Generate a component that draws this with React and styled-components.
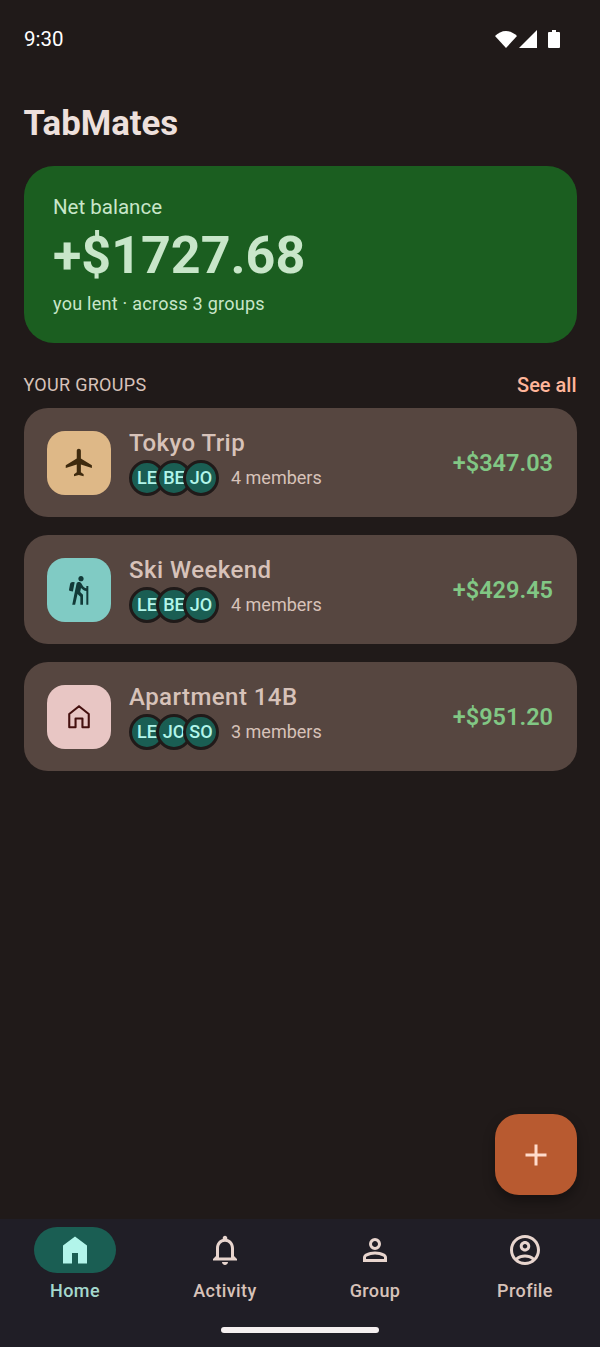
import React from 'react';
import styled, { createGlobalStyle } from 'styled-components';

const groups = [
  { name: 'Tokyo Trip', members: ['LE', 'BE', 'JO'], count: '4 members', amount: '+$347.03', kind: 'trip' },
  { name: 'Ski Weekend', members: ['LE', 'BE', 'JO'], count: '4 members', amount: '+$429.45', kind: 'ski' },
  { name: 'Apartment 14B', members: ['LE', 'JO', 'SO'], count: '3 members', amount: '+$951.20', kind: 'home' },
];

const tileColors = {
  trip: { bg: '#deb887', fg: '#3e2a0e' },
  ski: { bg: '#80cbc4', fg: '#123a38' },
  home: { bg: '#e8c6c4', fg: '#44100f' },
};

const tileIcons = {
  trip: <path d="M21 16v-2l-8-5V3.500c0-.83-.67-1.500-1.500-1.500S10 2.670 10 3.500V9l-8 5v2l8-2.500V19l-2 1.500V22l3.500-1 3.500 1v-1.500L13 19v-5.500l8 2.500z" fill="currentColor" />,
  ski: <path d="M13.500 5.500c1.100 0 2-.9 2-2s-.9-2-2-2-2 .9-2 2 .9 2 2 2zM17.500 10.780c-1.230-.37-2.220-1.170-2.800-2.180l-1-1.600c-.41-.65-1.110-1-1.840-1-.78 0-1.590.5-1.780 1.440S7 23 7 23h2.100l1.800-8 2.100 2v6h2v-7.500l-2.100-2 .6-3c1 1.150 2.410 2.010 4 2.340V23H19V9h-1.500v1.780zM7.430 13.130l-2.120-.41c-.54-.11-.9-.63-.79-1.170l.76-3.930c.21-1.080 1.260-1.790 2.340-1.580l1.160.23-1.350 6.860z" fill="currentColor" />,
  home: <path d="M5.500 18.800V10L12 4.800 18.500 10v8.800h-4.200V13H9.700v5.800z" fill="none" stroke="currentColor" strokeWidth="1.400" strokeLinejoin="round" />,
};

const navItems = [
  { label: 'Home', active: true, path: 'M4 21V9l8-6 8 6v12h-6v-7h-4v7z' },
  { label: 'Activity', path: 'M12 22c1.100 0 2-.9 2-2h-4c0 1.100.9 2 2 2zm6-6v-5c0-3.070-1.630-5.640-4.500-6.320V4c0-.83-.67-1.500-1.500-1.500s-1.500.67-1.500 1.500v.68C7.640 5.360 6 7.920 6 11v5l-2 2v1h16v-1l-2-2zm-2 1H8v-6c0-2.480 1.510-4.500 4-4.500s4 2.020 4 4.500v6z' },
  { label: 'Group', path: 'M12 12q-1.650 0-2.825-1.175Q8 9.650 8 8q0-1.650 1.175-2.825Q10.350 4 12 4q1.650 0 2.825 1.175Q16 6.350 16 8q0 1.650-1.175 2.825Q13.650 12 12 12Zm-8 8v-2.800q0-.85.438-1.563.437-.712 1.162-1.087 1.550-.775 3.150-1.163Q10.350 13 12 13t3.250.387q1.600.388 3.150 1.163.725.375 1.162 1.087Q20 16.350 20 17.200V20Zm2-2h12v-.8q0-.275-.138-.5-.137-.225-.362-.35-1.350-.675-2.725-1.012Q13.400 15 12 15t-2.775.338q-1.375.337-2.725 1.012-.225.125-.362.35-.138.225-.138.5Zm6-8q.825 0 1.413-.588Q14 8.825 14 8t-.587-1.412Q12.825 6 12 6q-.825 0-1.412.588Q10 7.175 10 8t.588 1.412Q11.175 10 12 10Z' },
  { label: 'Profile', path: 'M12 2C6.480 2 2 6.480 2 12s4.480 10 10 10 10-4.480 10-10S17.520 2 12 2zM7.350 18.500C8.660 17.560 10.260 17 12 17s3.340.56 4.650 1.500c-1.310.94-2.910 1.500-4.650 1.500s-3.340-.56-4.650-1.500zm10.790-1.380C16.450 15.800 14.320 15 12 15s-4.450.8-6.140 2.120C4.700 15.730 4 13.950 4 12c0-4.420 3.580-8 8-8s8 3.580 8 8c0 1.950-.7 3.730-1.860 5.120zM12 6c-1.930 0-3.500 1.570-3.500 3.500S10.070 13 12 13s3.500-1.570 3.500-3.500S13.930 6 12 6zm0 5c-.83 0-1.500-.67-1.500-1.500S11.170 8 12 8s1.500.67 1.500 1.500S12.830 11 12 11z' },
];

export default function App() {
  return (
    <Page>
      <GlobalStyle />
      <StatusBar>
        <Clock>9:30</Clock>
        <StatusIcons>
          <svg width="22" height="17" viewBox="0 0 22 17"><path d="M0 5C3 2 6.800 0 11 0s8 2 11 5L11 17z" fill="#fff" /></svg>
          <svg width="18" height="18" viewBox="0 0 18 18"><path d="M18 0v18H0z" fill="#fff" /></svg>
          <svg width="12" height="18" viewBox="0 0 12 18"><path d="M4 0h4v2h3a1 1 0 0 1 1 1v14a1 1 0 0 1-1 1H1a1 1 0 0 1-1-1V3a1 1 0 0 1 1-1h3z" fill="#fff" /></svg>
        </StatusIcons>
      </StatusBar>

      <Main>
        <AppTitle>TabMates</AppTitle>

        <BalanceCard>
          <BalanceLabel>Net balance</BalanceLabel>
          <BalanceAmount>+$1727.68</BalanceAmount>
          <BalanceNote>you lent · across 3 groups</BalanceNote>
        </BalanceCard>

        <SectionHead>
          <SectionTitle>YOUR GROUPS</SectionTitle>
          <SeeAll>See all</SeeAll>
        </SectionHead>

        <GroupList>
          {groups.map(group => (
            <GroupCard key={group.name}>
              <Tile $kind={group.kind}>
                <TileIcon viewBox="0 0 24 24" $kind={group.kind}>
                  {tileIcons[group.kind]}
                </TileIcon>
              </Tile>
              <GroupText>
                <GroupName>{group.name}</GroupName>
                <MemberRow>
                  <Avatars>
                    {group.members.map((m, i) => <Avatar key={m + i}>{m}</Avatar>)}
                  </Avatars>
                  <MemberCount>{group.count}</MemberCount>
                </MemberRow>
              </GroupText>
              <GroupAmount>{group.amount}</GroupAmount>
            </GroupCard>
          ))}
        </GroupList>
      </Main>

      <Fab>
        <svg width="36" height="36" viewBox="0 0 24 24"><path d="M19 13h-6v6h-2v-6H5v-2h6V5h2v6h6v2z" fill="currentColor" /></svg>
      </Fab>

      <BottomNav>
        <NavRow>
          {navItems.map(item => (
            <NavItem key={item.label} $active={item.active}>
              <NavPill $active={item.active}>
                <svg width="36" height="36" viewBox="0 0 24 24"><path d={item.path} fill="currentColor" fillRule="evenodd" /></svg>
              </NavPill>
              <NavLabel>{item.label}</NavLabel>
            </NavItem>
          ))}
        </NavRow>
        <GestureBar />
      </BottomNav>
    </Page>
  );
}

const GlobalStyle = createGlobalStyle`
  html, body {
    margin: 0;
    padding: 0;
    background: #201a19;
  }
  * {
    box-sizing: border-box;
  }
`

const Page = styled.div`
  position: relative;
  display: flex;
  flex-direction: column;
  width: 600px;
  height: 1347px;
  overflow: hidden;
  background: #201a19;
  font-family: Roboto, sans-serif;
`

const StatusBar = styled.div`
  display: flex;
  align-items: center;
  justify-content: space-between;
  height: 78px;
  padding: 0 40px 0 24px;
`

const Clock = styled.span`
  color: #fff;
  font-size: 20.500px;
`

const StatusIcons = styled.div`
  display: flex;
  align-items: center;
  gap: 2px;

  svg:last-child {
    margin-left: 9px;
  }
`

const Main = styled.main`
  flex: 1;
  padding: 0 23.500px;
`

const AppTitle = styled.h1`
  margin: 24px 0 21px;
  color: #ede0dc;
  font-size: 34.800px;
  line-height: 43px;
  font-weight: 700;
`

const BalanceCard = styled.section`
  height: 177px;
  padding: 27px 29.500px 0;
  border-radius: 30px;
  background: #1b5e20;
  color: #c8e6c9;
`

const BalanceLabel = styled.div`
  font-size: 20.500px;
  line-height: 28px;
`

const BalanceAmount = styled.div`
  margin-top: 4px;
  font-size: 52px;
  line-height: 62px;
  font-weight: 700;
`

const BalanceNote = styled.div`
  margin-top: 5px;
  font-size: 18px;
  line-height: 24px;
  letter-spacing: 0.260px;
`

const SectionHead = styled.div`
  display: flex;
  align-items: center;
  justify-content: space-between;
  height: 65px;
  padding-top: 18px;
`

const SectionTitle = styled.span`
  color: #d7c2b9;
  font-size: 18px;
  letter-spacing: 0.300px;
`

const SeeAll = styled.span`
  color: #ffb59a;
  font-size: 20px;
  font-weight: 500;
`

const GroupList = styled.div`
  display: flex;
  flex-direction: column;
  gap: 18px;
`

const GroupCard = styled.article`
  display: flex;
  align-items: center;
  height: 109px;
  padding: 0 23.500px;
  border-radius: 24px;
  background: #564640;
`

const Tile = styled.div`
  display: flex;
  align-items: center;
  justify-content: center;
  width: 64px;
  height: 64px;
  margin-right: 18px;
  border-radius: 18px;
  background: ${props => tileColors[props.$kind].bg};
  color: ${props => tileColors[props.$kind].fg};
`

const iconSizes = { trip: 33, ski: 32, home: 36 };

const TileIcon = styled.svg`
  width: ${props => iconSizes[props.$kind]}px;
  height: ${props => iconSizes[props.$kind]}px;
`

const GroupText = styled.div`
  flex: 1;
  min-width: 0;
`

const GroupName = styled.div`
  color: #d7c2b9;
  font-size: 24px;
  line-height: 26px;
  font-weight: 500;
  letter-spacing: 0.450px;
`

const MemberRow = styled.div`
  display: flex;
  align-items: center;
  margin-top: 4px;
`

const Avatars = styled.div`
  display: flex;
  margin-right: 12px;
`

const Avatar = styled.div`
  display: flex;
  align-items: center;
  justify-content: center;
  flex: none;
  width: 36px;
  height: 36px;
  overflow: hidden;
  border: 3px solid #201a19;
  border-radius: 50%;
  background: #1a5e53;
  color: #b2f5ea;
  font-size: 18px;
  font-weight: 500;

  & + & {
    margin-left: -9px;
  }
`

const MemberCount = styled.span`
  color: #d7c2b9;
  font-size: 18px;
`

const GroupAmount = styled.span`
  color: #81c784;
  font-size: 23.500px;
  font-weight: 600;
`

const Fab = styled.button`
  position: absolute;
  right: 23.500px;
  top: 1114px;
  display: flex;
  align-items: center;
  justify-content: center;
  width: 82px;
  height: 81px;
  padding: 0;
  border: none;
  border-radius: 24px;
  background: #b85a30;
  color: #ffdbcc;
  box-shadow: 0 6px 12px rgba(0, 0, 0, 0.35);
`

const BottomNav = styled.nav`
  height: 128px;
  padding-top: 8px;
  background: #201e26;
`

const NavRow = styled.div`
  display: grid;
  grid-template-columns: repeat(4, 1fr);
`

const NavItem = styled.div`
  display: flex;
  flex-direction: column;
  align-items: center;
  color: ${props => (props.$active ? '#a5d8cd' : '#d7c2b9')};
`

const NavPill = styled.div`
  display: flex;
  align-items: center;
  justify-content: center;
  width: 82px;
  height: 46px;
  border-radius: 23px;
  background: ${props => (props.$active ? '#1a5e53' : 'transparent')};
  color: ${props => (props.$active ? '#b2f5ea' : '#e8d5ce')};
`

const NavLabel = styled.span`
  margin-top: 6px;
  font-size: 18px;
  line-height: 24px;
  font-weight: 500;
  letter-spacing: 0.400px;
`

const GestureBar = styled.div`
  width: 158px;
  height: 6px;
  margin: 24px auto 0;
  border-radius: 3px;
  background: #f5f0f0;
`
